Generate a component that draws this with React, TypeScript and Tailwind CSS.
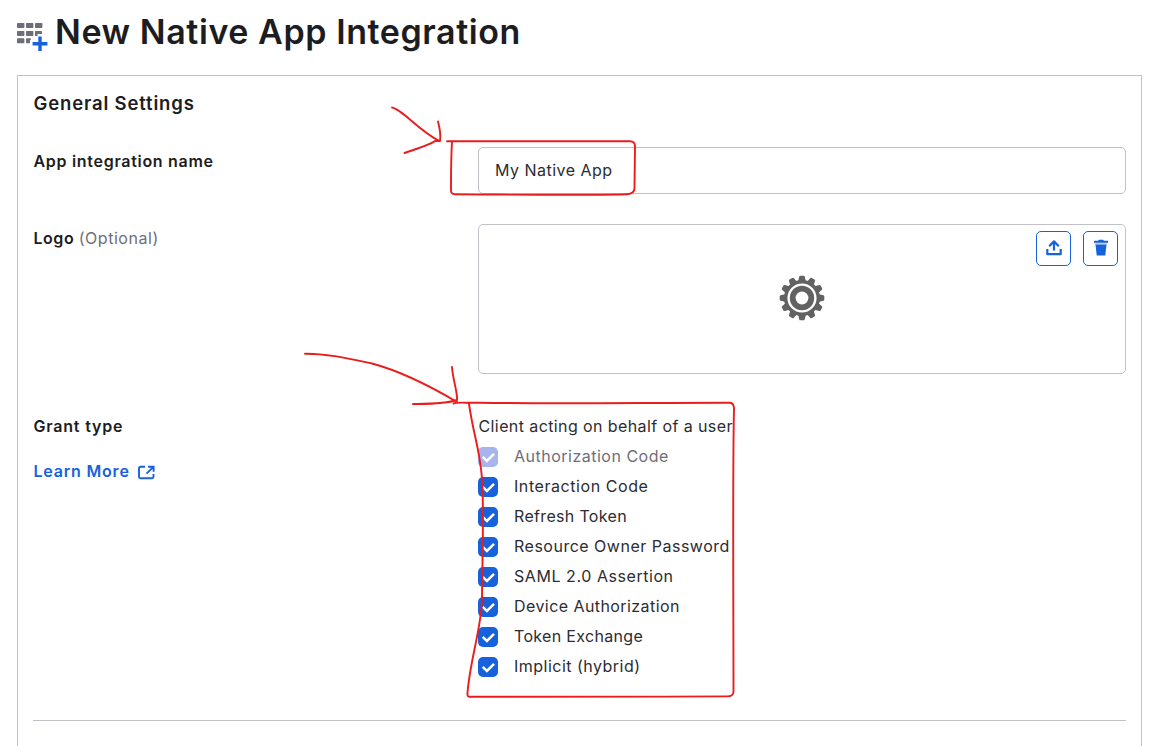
import type { ReactNode } from "react";

const grants = [
  { label: "Authorization Code", disabled: true, style: "tracking-[0.5px] text-[#6e6e78]" },
  { label: "Interaction Code", style: "tracking-[0.57px]" },
  { label: "Refresh Token", style: "tracking-[0.33px]" },
  { label: "Resource Owner Password", style: "tracking-[0.5px]" },
  { label: "SAML 2.0 Assertion", style: "tracking-[0.56px]" },
  { label: "Device Authorization", style: "tracking-[0.43px]" },
  { label: "Token Exchange", style: "tracking-[0.33px]" },
  { label: "Implicit (hybrid)", style: "tracking-[0.48px]" },
];

function AppIcon() {
  return (
    <svg className="mt-[22px] h-[30px] w-[31px] shrink-0" viewBox="0 0 31 30" fill="#6e6e78">
      {[0, 9, 18].map((x) => <rect key={x} x={x} y="1" width="7.4" height="5" rx=".8" />)}
      {[0, 9].map((x) => <rect key={x} x={x} y="9" width="7.4" height="5" rx=".8" />)}
      <path d="M18 9.800Q18 9 18.800 9h5.400q.8 0 .8.800V12h-4.500v2H18z" />
      <rect y="16.3" width="7.4" height="5" rx=".8" />
      <path d="M9 17.100q0-.8.800-.8h4V18H13v3.300H9.800q-.8 0-.8-.8z" />
      <path d="M15.600 21.700h14.800M23 14.500V29" stroke="#1662dd" strokeWidth="3.4" />
    </svg>
  );
}

function Gear() {
  return (
    <svg className="mb-[2px] h-[46px] w-[46px]" viewBox="-23 -23 46 46">
      <g fill="#626262">
        {[0, 30, 60, 90, 120, 150, 180, 210, 240, 270, 300, 330].map((a) => (
          <path key={a} d="M-4-16-2.700-21.400Q-2.500-22.300-1.500-22.300H1.500Q2.500-22.300 2.700-21.400L4-16z" transform={`rotate(${a})`} />
        ))}
        <circle r="18" />
      </g>
      <circle r="13.400" fill="none" stroke="#fff" strokeWidth="2.400" />
      <circle r="6.400" fill="#fff" />
    </svg>
  );
}

function UploadIcon() {
  return (
    <svg className="h-[17px] w-4" viewBox="0 0 16 17" fill="none" stroke="#1662dd" strokeWidth="2.2">
      <path d="M1.300 10v5.200h13.400V10M8 11.500V2.500M3.200 7.200 8 2.400l4.800 4.800" strokeLinejoin="round" />
    </svg>
  );
}

function TrashIcon() {
  return (
    <svg className="h-[17px] w-4" viewBox="0 0 16 17" fill="#1662dd">
      <path d="M1 1.800h4l1-1h4l1 1h4v2H1zM2.500 5.600h11L12.300 16.600H3.700z" />
      <path d="M2 3.800h12v1.800H2z" opacity=".3" />
    </svg>
  );
}

function ExternalIcon() {
  return (
    <svg className="ml-[8px] mt-[2px] h-[15px] w-[17px]" viewBox="0 0 17 15" fill="none" stroke="#1662dd" strokeWidth="1.9">
      <path d="M7 1.700H2.500q-1.500 0-1.500 1.500v8.600q0 1.500 1.500 1.500h11.500q1.500 0 1.500-1.500V9M10 1.700h5.600v5M15.400 1.900 8.500 8.600" />
    </svg>
  );
}

function Checkbox({ disabled }: { disabled?: boolean }) {
  return (
    <span className={`mr-4 mt-[2px] flex h-5 w-5 items-center justify-center rounded-[5px] ${disabled ? "bg-[#a7b5ec]" : "bg-[#1662dd]"}`}>
      <svg className="h-5 w-5" viewBox="0 0 20 20" fill="none" stroke="#fff" strokeWidth="2.5">
        <path d="M4.700 9.900 8.900 13.900l7.100-7" />
      </svg>
    </span>
  );
}

function IconButton({ children, label }: { children: ReactNode; label: string }) {
  return (
    <button aria-label={label} className="flex h-[35px] w-[35px] items-center justify-center rounded-[5px] border border-[#1662dd] pb-[2px]">
      {children}
    </button>
  );
}

function Annotations() {
  return (
    <svg className="pointer-events-none absolute inset-0 h-[746px] w-[1162px]" viewBox="0 0 1162 746" fill="none" stroke="#ea1c1c" strokeWidth="1.9" strokeLinecap="round" strokeLinejoin="round">
      <path d="M392 107.500C402 109 419 131 439.500 141M438 121.500C440 129 440.500 138 440 141L435 141C430 145 414 149.500 404.500 153" />
      <path d="M447 141.200H630Q635.200 141.200 635 147L634.500 188Q634.500 194 627 194.200C580 195.500 510 194.500 455 194.300Q450.700 194.200 451 190C451 172 451 158 452 142" />
      <path d="M305 353.700C326 353.500 346 358 372 363.500C400 371 430 386 457 402M452 367C452.500 378 458 394 457 400C446 404 428 403.800 413 404" />
      <path d="M453.500 403.500C455 402 465 403 480 402.700C560 404 650 402.600 730 402.700Q734 403 734 409C732.500 470 733.500 620 733.500 692Q733 696.500 727 696.400C640 697 550 696 470 696.700Q467 697 467.500 693C470 660 481 630 482 600C482.500 550 484 505 482 478C479 445 474 438 469 404" />
    </svg>
  );
}

export default function App() {
  return (
    <div className="relative h-[746px] w-[1162px] overflow-hidden bg-white pl-[17px] pr-5 font-['Inter',sans-serif] text-[16px] leading-[24px] text-[#1d1d21]">
      <header className="flex h-[75px]">
        <AppIcon />
        <h1 className="ml-[7px] mt-[11px] whitespace-nowrap text-[34px] font-semibold leading-[42px] tracking-[0.58px]">New Native App Integration</h1>
      </header>
      <main className="h-[680px] border border-[#c1c1c8] px-[15px] pt-[14px]">
        <h2 className="pl-[0.5px] text-[18.5px] font-semibold leading-[26px] tracking-[0.84px]">General Settings</h2>
        <div className="mt-[31px] flex">
          <div className="w-[445px] pl-[0.5px] pt-[2px] font-semibold tracking-[0.7px]">App integration name</div>
          <div className="flex h-[47px] flex-1 items-center rounded-[5px] border border-[#c1c1c8] pb-[2px] pl-4 tracking-[0.48px] text-[#2c2c31]">My Native App</div>
        </div>
        <div className="mt-[30px] flex">
          <div className="w-[445px] pl-[0.5px] pt-[2px] font-semibold tracking-[0.53px]">
            Logo <span className="font-normal text-[#6e6e78]">(Optional)</span>
          </div>
          <div className="relative flex h-[150px] flex-1 items-center justify-center rounded-[5px] border border-[#c1c1c8]">
            <Gear />
            <div className="absolute right-[7px] top-[6px] flex gap-3">
              <IconButton label="Upload logo"><UploadIcon /></IconButton>
              <IconButton label="Delete logo"><TrashIcon /></IconButton>
            </div>
          </div>
        </div>
        <div className="mt-10 flex h-[307px] border-b border-[#c1c1c8]">
          <div className="w-[445px] pl-[0.5px] font-semibold tracking-[0.8px]">
            <div>Grant type</div>
            <a className="mt-[21px] flex items-center text-[#1662dd]">Learn More<ExternalIcon /></a>
          </div>
          <div className="text-[#2c2c31]">
            <div className="pl-[0.5px] tracking-[0.4px]">Client acting on behalf of a user</div>
            {grants.map((g) => (
              <label key={g.label} className="mt-[6px] flex h-6 items-center">
                <Checkbox disabled={g.disabled} />
                <span className={g.style}>{g.label}</span>
              </label>
            ))}
          </div>
        </div>
      </main>
      <Annotations />
    </div>
  );
}
